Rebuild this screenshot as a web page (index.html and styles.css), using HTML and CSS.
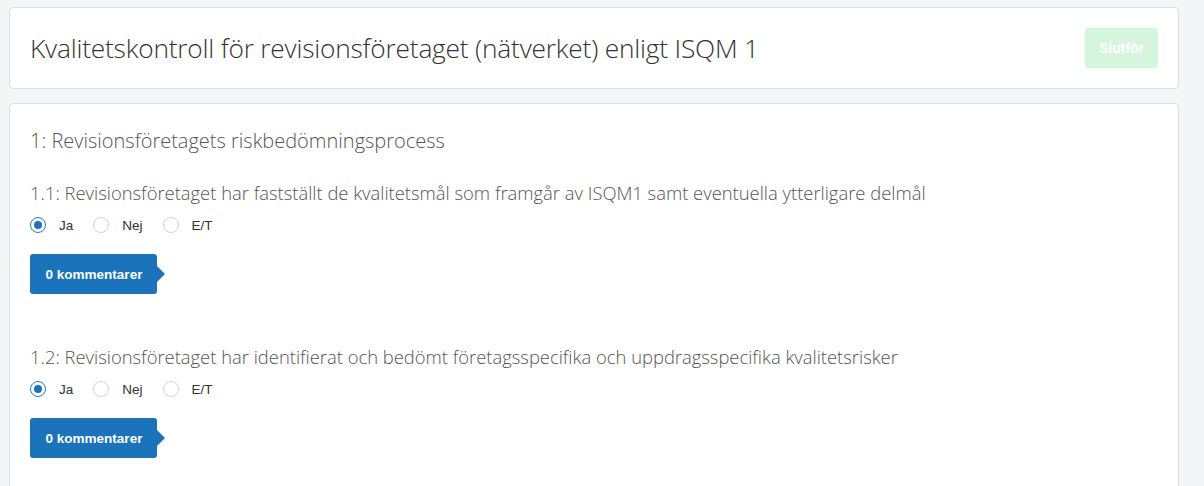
FILE: index.html
```html
<!DOCTYPE html>
<html lang="sv">
<head>
<meta charset="utf-8">
<title>Kvalitetskontroll</title>
<link rel="stylesheet" href="styles.css">
</head>
<body>
<div class="page">
  <header class="card header-card">
    <h1 class="title">Kvalitetskontroll för revisionsföretaget (nätverket) enligt ISQM 1</h1>
    <button class="finish" disabled>Slutför</button>
  </header>
  <section class="card body-card">
    <h2 class="section-title">1: Revisionsföretagets riskbedömningsprocess</h2>
    <div class="question">
      <h3 class="q-title">1.1: Revisionsföretaget har fastställt de kvalitetsmål som framgår av ISQM1 samt eventuella ytterligare delmål</h3>
      <div class="options">
        <label class="opt"><span class="radio checked"></span>Ja</label>
        <label class="opt"><span class="radio"></span>Nej</label>
        <label class="opt"><span class="radio"></span>E/T</label>
      </div>
      <button class="comments">0 kommentarer</button>
    </div>
    <div class="question">
      <h3 class="q-title">1.2: Revisionsföretaget har identifierat och bedömt företagsspecifika och uppdragsspecifika kvalitetsrisker</h3>
      <div class="options">
        <label class="opt"><span class="radio checked"></span>Ja</label>
        <label class="opt"><span class="radio"></span>Nej</label>
        <label class="opt"><span class="radio"></span>E/T</label>
      </div>
      <button class="comments">0 kommentarer</button>
    </div>
  </section>
</div>
</body>
</html>
```

FILE: styles.css
```css
html, body {
  margin: 0;
  padding: 0;
  background: #f4f5f7;
  height: 100%;
  overflow: hidden;
}
.page {
  width: 1170px;
  margin-left: 9px;
  padding-top: 7px;
  display: flex;
  flex-direction: column;
  gap: 14px;
}
.card {
  background: #fff;
  border: 1px solid #dedede;
  border-radius: 4px;
  box-sizing: border-box;
}
.header-card {
  height: 82px;
  display: flex;
  align-items: center;
  justify-content: space-between;
  padding: 0 20px 0 20px;
}
.title {
  margin: 0;
  font-family: "Open Sans", sans-serif;
  font-weight: 300;
  font-size: 26.3px;
  color: #333;
  letter-spacing: -0.2px;
}
.finish {
  width: 73px;
  height: 40px;
  border: none;
  border-radius: 4px;
  background: #d6f5dd;
  color: #fff;
  font-family: "Liberation Sans", Arial, sans-serif;
  font-weight: bold;
  font-size: 14px;
  padding: 0;
}
.body-card {
  height: 420px;
  padding: 24px 20px 0 20px;
}
.section-title {
  margin: 0 0 27px 0;
  font-family: "Open Sans", sans-serif;
  font-weight: 300;
  font-size: 20px;
  color: #555;
  line-height: 26px;
}
.question {
  display: flex;
  flex-direction: column;
  align-items: flex-start;
  margin-bottom: 51px;
}
.q-title {
  margin: 0;
  font-family: "Open Sans", sans-serif;
  font-weight: 300;
  font-size: 18.4px;
  color: #555;
  line-height: 24px;
}
.options {
  display: flex;
  margin-top: 10px;
  height: 20px;
  align-items: center;
}
.opt {
  display: flex;
  align-items: center;
  font-family: "Liberation Sans", Arial, sans-serif;
  font-size: 13.5px;
  color: #333;
  margin-right: 20px;
}
.radio {
  width: 16px;
  height: 16px;
  border: 1px solid #d3d3d3;
  border-radius: 50%;
  background: #fff;
  margin-right: 13px;
  position: relative;
  box-sizing: border-box;
}
.radio.checked {
  border-color: #2a7bc6;
}
.radio.checked::after {
  content: "";
  position: absolute;
  left: 3px;
  top: 3px;
  width: 8px;
  height: 8px;
  border-radius: 50%;
  background: #1a73bd;
}
.comments {
  position: relative;
  margin-top: 19px;
  width: 127px;
  height: 40px;
  border: none;
  border-radius: 3px;
  background: #1a73bb;
  color: #fff;
  font-family: "Liberation Sans", Arial, sans-serif;
  font-weight: bold;
  font-size: 13.5px;
  padding: 0 0 0 1px;
  text-align: center;
}
.comments::after {
  content: "";
  position: absolute;
  right: -8px;
  top: 12px;
  border-top: 8px solid transparent;
  border-bottom: 8px solid transparent;
  border-left: 8px solid #1a73bb;
}
```
